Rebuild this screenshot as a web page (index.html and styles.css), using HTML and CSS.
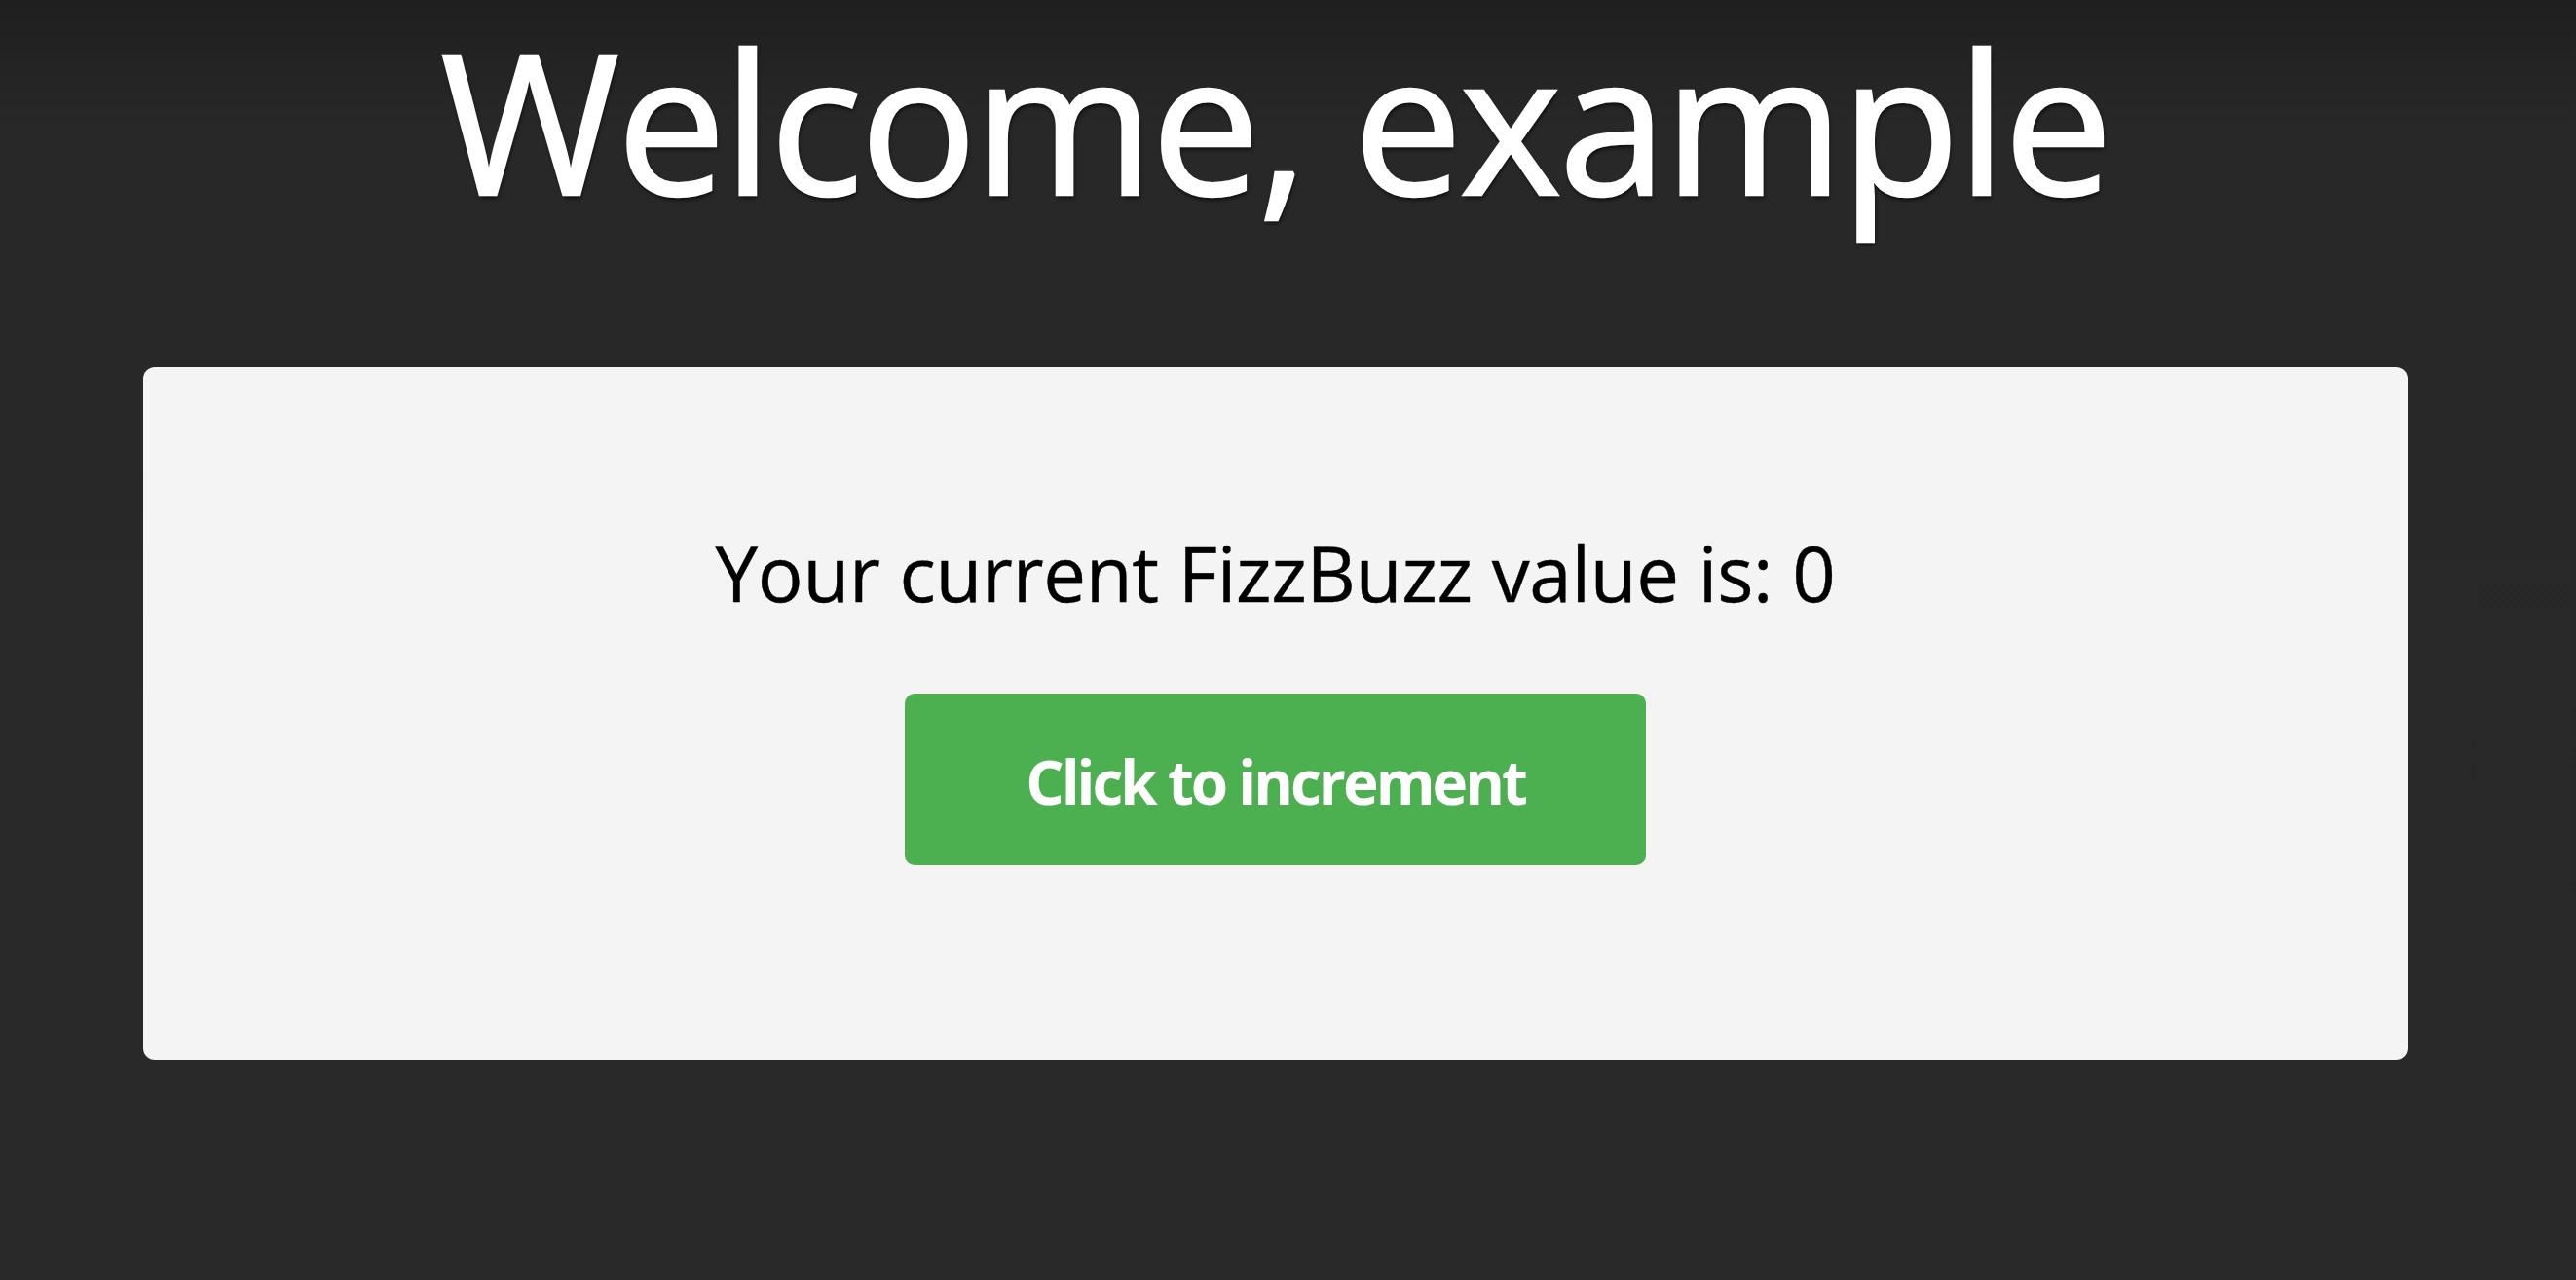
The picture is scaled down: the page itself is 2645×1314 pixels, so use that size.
FILE: index.html
```html
<!DOCTYPE html>
<html lang="en">
<head>
<meta charset="utf-8">
<title>FizzBuzz</title>
<link rel="stylesheet" href="styles.css">
</head>
<body>
<main class="page">
  <h1 class="welcome">Welcome, example</h1>
  <section class="card">
    <p class="value">Your current FizzBuzz value is: 0</p>
    <button class="increment" type="button">Click to increment</button>
  </section>
</main>
</body>
</html>
```
FILE: styles.css
```css
html, body {
  margin: 0;
  padding: 0;
}
body {
  min-height: 1314px;
  background: linear-gradient(#1f1f1f 0px, #282828 130px, #292929 100%);
  font-family: "Open Sans", "Noto Sans", "DejaVu Sans", sans-serif;
}
.page {
  display: flex;
  flex-direction: column;
  align-items: stretch;
  padding: 4px 173px 0 147px;
}
.welcome {
  margin: 0;
  text-align: center;
  color: #ffffff;
  font-size: 199px;
  font-weight: 400;
  letter-spacing: -2.5px;
  line-height: 1.2;
  -webkit-text-stroke: 2.5px #ffffff;
  text-shadow: 1px 3px 4px rgba(0, 0, 0, 0.8);
}
.card {
  margin-top: 134px;
  background: #f4f4f4;
  border-radius: 12px;
  padding: 165px 0 200px;
  display: flex;
  flex-direction: column;
  align-items: center;
  gap: 77px;
}
.value {
  margin: 0;
  color: #000;
  font-size: 78px;
  letter-spacing: -0.3px;
  line-height: 1.2;
  -webkit-text-stroke: 0.4px #000;
}
.increment {
  font-family: inherit;
  background: #4caf50;
  color: #fff;
  border: none;
  border-radius: 10px;
  font-size: 62px;
  font-weight: 700;
  letter-spacing: -3px;
  line-height: 1.2;
  padding: 53px 124px 48px;
}
```
